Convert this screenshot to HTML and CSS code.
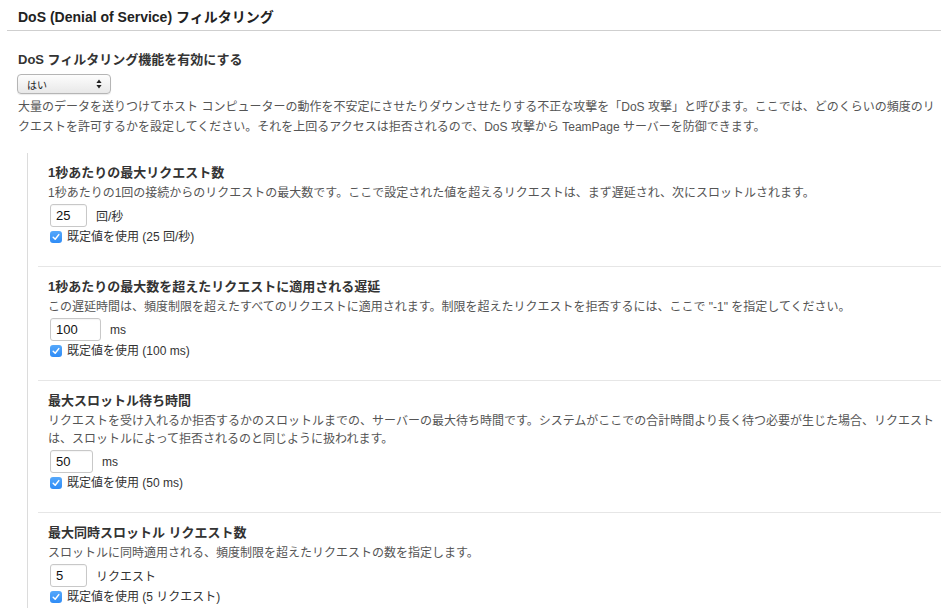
FILE: index.html
```html
<!DOCTYPE html>
<html lang="ja">
<head>
<meta charset="utf-8">
<title>DoS</title>
<link rel="stylesheet" href="styles.css">
</head>
<body>
<div class="page">
  <h2 class="page-title">DoS (Denial of Service) フィルタリング</h2>
  <div class="main">
    <div class="field-label">DoS フィルタリング機能を有効にする</div>
    <div class="select">
      <span class="select-text">はい</span>
      <svg class="select-arrows" width="6" height="10" viewBox="0 0 6 10"><path d="M3 0.5 L5.6 4 H0.4 Z M3 9.5 L5.6 6 H0.4 Z" fill="#222"/></svg>
    </div>
    <p class="intro">大量のデータを送りつけてホスト コンピューターの動作を不安定にさせたりダウンさせたりする不正な攻撃を「DoS 攻撃」と呼びます。ここでは、どのくらいの頻度のリクエストを許可するかを設定してください。それを上回るアクセスは拒否されるので、DoS 攻撃から TeamPage サーバーを防御できます。</p>
  </div>
  <div class="group">
    <div class="item">
      <div class="item-title">1秒あたりの最大リクエスト数</div>
      <div class="item-desc">1秒あたりの1回の接続からのリクエストの最大数です。ここで設定された値を超えるリクエストは、まず遅延され、次にスロットルされます。</div>
      <div class="input-row"><span class="input w37">25</span><span class="unit">回/秒</span></div>
      <div class="check-row"><span class="check"><svg width="8" height="8" viewBox="0 0 8 8"><path d="M1.2 4.3 L3.2 6.2 L6.8 1.6" fill="none" stroke="#fff" stroke-width="1.5" stroke-linecap="round" stroke-linejoin="round"/></svg></span><span>既定値を使用 (25 回/秒)</span></div>
    </div>
    <div class="item">
      <div class="item-title">1秒あたりの最大数を超えたリクエストに適用される遅延</div>
      <div class="item-desc">この遅延時間は、頻度制限を超えたすべてのリクエストに適用されます。制限を超えたリクエストを拒否するには、ここで "-1" を指定してください。</div>
      <div class="input-row"><span class="input w51">100</span><span class="unit">ms</span></div>
      <div class="check-row"><span class="check"><svg width="8" height="8" viewBox="0 0 8 8"><path d="M1.2 4.3 L3.2 6.2 L6.8 1.6" fill="none" stroke="#fff" stroke-width="1.5" stroke-linecap="round" stroke-linejoin="round"/></svg></span><span>既定値を使用 (100 ms)</span></div>
    </div>
    <div class="item">
      <div class="item-title">最大スロットル待ち時間</div>
      <div class="item-desc">リクエストを受け入れるか拒否するかのスロットルまでの、サーバーの最大待ち時間です。システムがここでの合計時間より長く待つ必要が生じた場合、リクエストは、スロットルによって拒否されるのと同じように扱われます。</div>
      <div class="input-row"><span class="input w43">50</span><span class="unit">ms</span></div>
      <div class="check-row"><span class="check"><svg width="8" height="8" viewBox="0 0 8 8"><path d="M1.2 4.3 L3.2 6.2 L6.8 1.6" fill="none" stroke="#fff" stroke-width="1.5" stroke-linecap="round" stroke-linejoin="round"/></svg></span><span>既定値を使用 (50 ms)</span></div>
    </div>
    <div class="item">
      <div class="item-title">最大同時スロットル リクエスト数</div>
      <div class="item-desc">スロットルに同時適用される、頻度制限を超えたリクエストの数を指定します。</div>
      <div class="input-row"><span class="input w37">5</span><span class="unit">リクエスト</span></div>
      <div class="check-row"><span class="check"><svg width="8" height="8" viewBox="0 0 8 8"><path d="M1.2 4.3 L3.2 6.2 L6.8 1.6" fill="none" stroke="#fff" stroke-width="1.5" stroke-linecap="round" stroke-linejoin="round"/></svg></span><span>既定値を使用 (5 リクエスト)</span></div>
    </div>
  </div>
</div>
</body>
</html>
```

FILE: styles.css
```css
html, body {
  margin: 0;
  padding: 0;
  background: #fff;
}
body {
  font-family: "Liberation Sans", "Noto Sans CJK JP", sans-serif;
  color: #333;
  overflow: hidden;
}
.page {
  padding-left: 7px;
}
.page-title {
  margin: 0;
  padding: 8px 0 0 11px;
  height: 22px;
  font-size: 14px;
  line-height: 18px;
  font-weight: bold;
  color: #222;
  border-bottom: 1px solid #cfcfcf;
}
.main {
  padding: 20px 0 0 11px;
}
.field-label {
  font-size: 13px;
  font-weight: bold;
  line-height: 18px;
  color: #333;
}
.select {
  margin: 5px 0 0 -1px;
  height: 18px;
  border: 1px solid #b5b5b5;
  border-radius: 4px;
  background: linear-gradient(#fdfdfd, #e8e8e8);
  box-shadow: 0 1px 1px rgba(0,0,0,0.08);
  display: flex;
  align-items: center;
  justify-content: space-between;
  padding: 0 8px 0 9px;
  box-sizing: content-box;
  width: 75px;
}
.select-text {
  font-size: 10px;
  color: #222;
}
.select-arrows {
  display: block;
}
.intro {
  margin: 3px 0 0;
  font-size: 12px;
  line-height: 20px;
  color: #555;
}
.group {
  margin: 16px 0 0 20px;
  border-left: 1px solid #dcdcdc;
}
.item {
  margin-left: 10px;
  padding: 11px 0 21px 10px;
}
.item + .item {
  border-top: 1px solid #e6e6e6;
}
.item-title {
  font-size: 13px;
  font-weight: bold;
  line-height: 18px;
  color: #333;
}
.item-desc {
  margin-top: 2px;
  font-size: 12px;
  line-height: 18px;
  color: #555;
}
.input-row {
  margin-top: 2px;
  padding-left: 2px;
  display: flex;
  align-items: center;
  gap: 9px;
}
.input {
  box-sizing: border-box;
  height: 23px;
  border: 1px solid #c8c8c8;
  border-radius: 3px;
  padding: 0 5px;
  font-size: 13px;
  line-height: 21px;
  color: #111;
  box-shadow: inset 0 1px 1px rgba(0,0,0,0.04);
}
.w37 { width: 37px; }
.w43 { width: 43px; }
.w51 { width: 51px; }
.unit {
  font-size: 12px;
  color: #333;
}
.check-row {
  margin-top: 2px;
  padding-left: 2px;
  display: flex;
  align-items: center;
  gap: 5px;
  font-size: 12px;
  line-height: 16px;
  color: #333;
}
.check {
  width: 12px;
  height: 12px;
  border-radius: 3px;
  background: linear-gradient(#55a8fb, #2f8cf6);
  display: flex;
  align-items: center;
  justify-content: center;
}
.check svg {
  display: block;
}
```
